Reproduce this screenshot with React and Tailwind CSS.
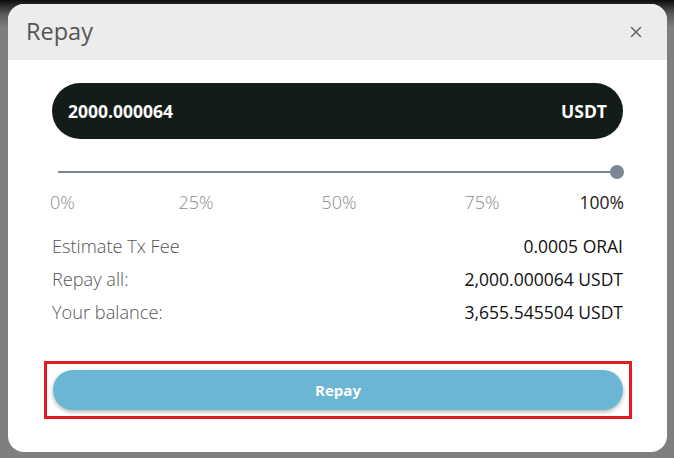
import { X } from 'lucide-react'

const rows = [
  { label: 'Estimate Tx Fee', value: '0.0005 ORAI' },
  { label: 'Repay all:', value: '2,000.000064 USDT' },
  { label: 'Your balance:', value: '3,655.545504 USDT' },
]

export default function App() {
  return (
    <div
      className="w-[674px] h-[458px] bg-[#7f7f7f] pt-[4px] pl-[8px]"
      style={{ backgroundImage: 'linear-gradient(to bottom, #0c0c0c 0px, #5a5a5a 14px, #7f7f7f 28px)' }}
    >
      <div className="w-[659px] h-[448px] bg-white rounded-[16px] overflow-hidden flex flex-col font-['Open_Sans',sans-serif]">
        <div className="h-[56px] bg-[#ececec] flex items-center justify-between pl-[18px] pr-[22px] shrink-0">
          <span className="text-[23.5px] text-[#555] leading-none">Repay</span>
          <X className="w-[18px] h-[18px] text-[#666]" strokeWidth={2} />
        </div>

        <div className="px-[44px] pt-[23px] flex flex-col">
          <div className="h-[56px] rounded-full bg-[#141c18] flex items-center justify-between px-[16px] text-white font-bold text-[17.5px]">
            <span>2000.000064</span>
            <span>USDT</span>
          </div>

          <div className="relative mt-[26px] h-[14px] mx-[6px] flex items-center">
            <div className="w-full h-[2px] bg-[#7b8794]" />
            <div className="absolute right-[-7px] w-[14px] h-[14px] rounded-full bg-[#7b8794]" />
          </div>

          <div className="relative mt-[10px] h-[25px] text-[18px] font-light text-[#8c8c8c] ml-[-2px] mr-[-1px]">
            <span className="absolute left-0 top-0">0%</span>
            <span className="absolute left-[146px] top-0 w-0 flex justify-center">25%</span>
            <span className="absolute left-[289px] top-0 w-0 flex justify-center">50%</span>
            <span className="absolute left-[432px] top-0 w-0 flex justify-center">75%</span>
            <span className="absolute right-0 top-0 text-[#1a1a1a] font-normal text-[17.5px]">100%</span>
          </div>

          <div className="mt-[21px] flex flex-col gap-[10px] text-[17.5px]">
            {rows.map(r => (
              <div key={r.label} className="flex justify-between h-[23px] items-center">
                <span className="text-[#555] font-light text-[18.2px]">{r.label}</span>
                <span className="text-[#111]">{r.value}</span>
              </div>
            ))}
          </div>

          <div className="mt-[37px] ml-[-8px] mr-[-9px] border-[3px] border-[#e31b23] px-[6px] pt-[6px] pb-[6px]">
            <button className="w-full h-[40px] rounded-full bg-[#6bb6d5] text-white font-bold text-[15px] shadow-[0_2px_4px_rgba(0,0,0,0.3)]">
              Repay
            </button>
          </div>
        </div>
      </div>
    </div>
  )
}
